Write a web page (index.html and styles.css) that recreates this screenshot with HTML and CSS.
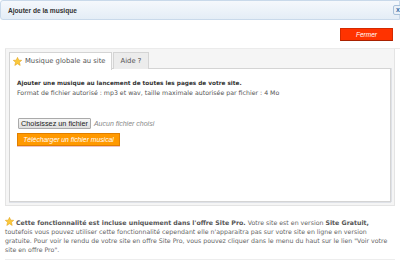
FILE: index.html
```html
<!DOCTYPE html>
<html>
	<head>
		<meta charset="utf-8">
		<title>Ajouter de la musique</title>
		<link rel="stylesheet" href="styles.css">
	</head>
	<body>
		<div class="dialog">
			<div class="titlebar">
				<span class="title">Ajouter de la musique</span>
				<span class="close">x</span>
			</div>
			<div class="actions">
				<button class="btn-close">Fermer</button>
			</div>
			<div class="tabs">
				<ul class="tab-nav">
					<li class="tab active">
						<svg class="star" viewBox="0 0 10 10" width="9" height="9"><polygon points="5,0.4 6.4,3.5 9.7,3.7 7.2,5.9 8,9.4 5,7.5 2,9.4 2.8,5.9 0.3,3.7 3.6,3.5" fill="#fbc93a" stroke="#e2a21c" stroke-width="0.6"/></svg>
						Musique globale au site
					</li>
					<li class="tab">Aide ?</li>
				</ul>
				<div class="panel">
					<p class="lead">Ajouter une musique au lancement de toutes les pages de votre site.</p>
					<p class="info">Format de fichier autorisé : mp3 et wav, taille maximale autorisée par fichier : 4 Mo</p>
					<div class="file">
						<span class="file-btn">Choisissez un fichier</span>
						<span class="file-name">Aucun fichier choisi</span>
					</div>
					<button class="btn-upload">Télécharger un fichier musical</button>
				</div>
			</div>
			<div class="note">
				<p>
					<svg class="star" viewBox="0 0 10 10" width="9" height="9"><polygon points="5,0.4 6.4,3.5 9.7,3.7 7.2,5.9 8,9.4 5,7.5 2,9.4 2.8,5.9 0.3,3.7 3.6,3.5" fill="#fbc93a" stroke="#e2a21c" stroke-width="0.6"/></svg>
					<b>Cette fonctionnalité est incluse uniquement dans l'offre Site Pro.</b> Votre site est en version <b>Site Gratuit,</b> toutefois vous pouvez utiliser cette fonctionnalité cependant elle n'apparaitra pas sur votre site en ligne en version<br>
					gratuite. Pour voir le rendu de votre site en offre Site Pro, vous pouvez cliquer dans le menu du haut sur le lien "Voir votre site en offre Pro".
				</p>
			</div>
		</div>
	</body>
</html>
```

FILE: styles.css
```css
*{
	margin: 0;
	padding: 0;
	box-sizing: border-box;
}

ul{
	list-style: none;
}

body{
	background: #fff;
	font-family: "DejaVu Sans", Verdana, sans-serif;
	color: #555;
	overflow: hidden;
}

.dialog{
	width: 400px;
}

.titlebar{
	height: 20px;
	display: flex;
	align-items: center;
	justify-content: space-between;
	padding-left: 7px;
	background: linear-gradient(#f5f8fc, #e4edf6);
	border: 1px solid #c9d9ea;
	border-radius: 3px 0 0 3px;
}

.titlebar .title{
	font-family: "Liberation Sans", Arial, sans-serif;
	font-weight: bold;
	font-size: 6.6px;
	color: #333;
}

.titlebar .close{
	width: 10px;
	height: 10px;
	margin-right: -4px;
	border: 1px solid #a9c1da;
	border-radius: 2px;
	background: #eaf1f8;
	color: #3a6ea5;
	font-family: "Liberation Sans", Arial, sans-serif;
	font-size: 7px;
	font-weight: bold;
	line-height: 8px;
	padding-left: 2px;
}

.actions{
	display: flex;
	justify-content: flex-end;
	padding: 8px 7px 7px 0;
	margin-left: 5px;
	border-bottom: 1px solid #ebebeb;
}

.btn-close{
	width: 53px;
	height: 13px;
	background: #ff3300;
	border: 1px solid #d42a00;
	border-bottom-color: #a82100;
	color: #fff;
	font-family: "Liberation Sans", Arial, sans-serif;
	font-style: italic;
	font-size: 6.5px;
}

.tabs{
	margin: 0 5px 0 5px;
	padding: 3px 3px 3px 3px;
	background: #f5f5f5;
	border: 1px solid #e4e4e4;
	border-top: none;
}

.tab-nav{
	display: flex;
	gap: 1px;
	height: 17px;
	position: relative;
	z-index: 1;
}

.tab{
	display: flex;
	align-items: center;
	gap: 3px;
	height: 17px;
	padding: 0 7px 1px 7px;
	border: 1px solid #d4d4d4;
	border-bottom: none;
	background: #ececec;
	font-size: 6.8px;
	color: #555;
}

.tab.active{
	background: #fff;
	height: 18px;
	padding: 0 5px 1px 3px;
}

.panel{
	height: 134px;
	margin-top: -1px;
	padding: 10px 7px 0 7px;
	background: #fff;
	border: 1px solid #d4d4d4;
	box-shadow: 0 1px 0 #dfe2e8, 1px 0 0 #dfe2e8;
}

.lead{
	font-weight: bold;
	font-size: 5.75px;
	color: #333;
	line-height: 9px;
}

.info{
	font-size: 6.25px;
	line-height: 10px;
	color: #555;
}

.file{
	display: flex;
	align-items: center;
	gap: 3px;
	margin-top: 20px;
	margin-left: 1px;
}

.file-btn{
	height: 11px;
	padding: 0 2px;
	border: 1px solid #aaa;
	border-radius: 1px;
	background: linear-gradient(#f6f6f6, #dedede);
	font-family: "Liberation Sans", Arial, sans-serif;
	font-size: 7.3px;
	line-height: 9px;
	color: #222;
}

.file-name{
	font-family: "Liberation Sans", Arial, sans-serif;
	font-style: italic;
	font-size: 7px;
	color: #888;
}

.btn-upload{
	display: block;
	width: 103px;
	height: 13px;
	margin-top: 4px;
	background: #ff9900;
	border: 1px solid #e07f00;
	box-shadow: 0 1px 0 #f0c4c4;
	color: #fff;
	font-family: "Liberation Sans", Arial, sans-serif;
	font-style: italic;
	font-size: 6.8px;
}

.note{
	margin: 0 5px;
	padding: 11px 0 5px 0;
	border-bottom: 1px solid #ededed;
}

.note p{
	font-size: 6.25px;
	line-height: 9px;
	color: #666;
}

.note b{
	color: #555;
}

.note .star{
	vertical-align: -1px;
}
```
